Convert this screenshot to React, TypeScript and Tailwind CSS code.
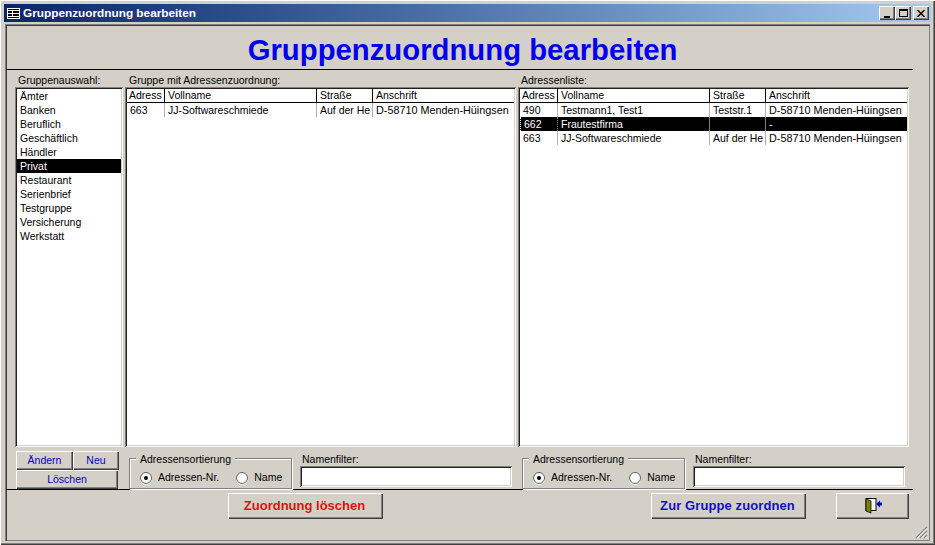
const raised = "bg-[#d4d0c8] shadow-[inset_1px_1px_0_#ffffff,inset_-1px_-1px_0_#404040,inset_-2px_-2px_0_#808080]";
const sunken = "bg-white shadow-[inset_1px_1px_0_#808080,inset_-1px_-1px_0_#ffffff,inset_2px_2px_0_#202020,inset_-2px_-2px_0_#d4d0c8]";

type Row = { nr: string; name: string; str: string; an: string; sel?: boolean };

const groups = ["Ämter", "Banken", "Beruflich", "Geschäftlich", "Händler", "Privat", "Restaurant", "Serienbrief", "Testgruppe", "Versicherung", "Werkstatt"];

function Cell({ children, sel, last, focus }: { children?: React.ReactNode; sel?: boolean; last?: boolean; focus?: boolean }) {
  return (
    <div className={`h-[14px] leading-[14px] pl-[3px] overflow-hidden whitespace-nowrap ${last ? "text-[10.8px]" : sel ? "border-r border-[#808080]" : "border-r border-[#b0b0b0]"} ${focus ? "border-l border-dotted border-l-white pl-[2px]" : ""}`}>
      {children}
    </div>
  );
}

function AddressList({ width, rows }: { width: string; rows: Row[] }) {
  return (
    <div className={`${sunken} ${width} h-[360px] pt-[2px] pl-[2px] pr-[2px]`}>
      <div className="grid grid-cols-[38px_152px_56px_1fr] h-[13px] border-b border-black box-content">
        <div className="h-[13px] leading-[13px] pl-[2px] border-r border-black overflow-hidden">Adress</div>
        <div className="h-[13px] leading-[13px] pl-[3px] border-r border-black">Vollname</div>
        <div className="h-[13px] leading-[13px] pl-[3px] border-r border-black">Straße</div>
        <div className="h-[13px] leading-[13px] pl-[3px]">Anschrift</div>
      </div>
      {rows.map((r) => (
        <div key={r.nr} className={`grid grid-cols-[38px_152px_56px_1fr] ${r.sel ? "bg-black text-white" : ""}`}>
          <Cell sel={r.sel} focus={r.sel}>{r.nr}</Cell>
          <Cell sel={r.sel}>{r.name}</Cell>
          <Cell sel={r.sel}>{r.str}</Cell>
          <Cell sel={r.sel} last>{r.an}</Cell>
        </div>
      ))}
    </div>
  );
}

function Radio({ on, label }: { on?: boolean; label: string }) {
  return (
    <div className="flex items-center gap-[6px]">
      <span className="w-[12px] h-[12px] rounded-full bg-white border border-[#606060] shadow-[0_1px_0_#ffffff] flex items-center justify-center">
        {on && <span className="w-[4px] h-[4px] rounded-full bg-black" />}
      </span>
      <span>{label}</span>
    </div>
  );
}

function SortFilter({ inputW }: { inputW: string }) {
  return (
    <div className="flex gap-[8px]">
      <div className="relative w-[163px] h-[31px] mt-[10px] border border-[#808080] shadow-[inset_1px_1px_0_#ffffff,1px_1px_0_#ffffff]">
        <span className="absolute left-[6px] -top-[6px] bg-[#d4d0c8] px-[4px] leading-[13px]">Adressensortierung</span>
        <div className="flex gap-[17px] pl-[10px] pt-[12px] leading-[13px]">
          <Radio on label="Adressen-Nr." />
          <Radio label="Name" />
        </div>
      </div>
      <div className="flex flex-col pt-[5px]">
        <span className="leading-[13px] pl-[2px]">Namenfilter:</span>
        <div className={`${sunken} ${inputW} h-[21px]`} />
      </div>
    </div>
  );
}

function Btn({ className, children }: { className: string; children: React.ReactNode }) {
  return <div className={`${raised} flex items-center justify-center ${className}`}>{children}</div>;
}

export default function App() {
  return (
    <div className="w-[935px] h-[545px] bg-[#d4d0c8] overflow-hidden text-[10.5px] text-black font-['Liberation_Sans',Arial,sans-serif] p-[4px] shadow-[inset_1px_1px_0_#ffffff,inset_-1px_-1px_0_#404040,inset_-2px_-2px_0_#808080]">
      <div className="h-[18px] bg-gradient-to-r from-[#0a246a] to-[#a6caf0] flex items-center pl-[3px] pr-[2px] text-white font-bold">
        <svg width="13" height="11" viewBox="0 0 13 11" className="shrink-0">
          <rect x="0" y="0" width="13" height="11" fill="#fff" />
          <rect x="1" y="1" width="11" height="1" fill="#000" />
          <rect x="1" y="3" width="4" height="2" fill="#000" />
          <rect x="6" y="3" width="6" height="2" fill="#000" />
          <rect x="1" y="6" width="4" height="2" fill="#000" />
          <rect x="6" y="6" width="6" height="2" fill="#000" />
          <rect x="1" y="9" width="11" height="1" fill="#000" />
        </svg>
        <span className="ml-[3px] text-[11.8px] leading-[14px]">Gruppenzuordnung bearbeiten</span>
        <div className="ml-auto flex">
          <Btn className="w-[16px] h-[14px] items-end pb-[2px]"><span className="block w-[6px] h-[2px] bg-black -ml-[1px]" /></Btn>
          <Btn className="w-[16px] h-[14px]"><span className="block w-[9px] h-[8px] border border-black border-t-2" /></Btn>
          <Btn className="w-[16px] h-[14px] ml-[2px]">
            <svg width="8" height="7" viewBox="0 0 8 7"><path d="M0.5 0 7.5 7M7.5 0 0.5 7" stroke="#000" strokeWidth="1.4" /></svg>
          </Btn>
        </div>
      </div>
      <div className="relative mt-[2px] ml-[1px] w-[925px] h-[517px] shadow-[inset_1px_1px_0_#808080,inset_2px_2px_0_#404040,inset_-1px_-1px_0_#808080]">
        <div className="h-[46px] ml-[1px] mr-[17px] border-b border-black flex items-center justify-center pt-[7px] pl-[6px] text-[#0000ee] font-bold text-[29.3px] leading-none">
          Gruppenzuordnung bearbeiten
        </div>
        <div className="flex pl-[10px] mt-[4px]">
          <div className="w-[110px]">
            <div className="h-[13px] leading-[13px] pl-[3px]">Gruppenauswahl:</div>
            <div className={`${sunken} h-[360px] w-[108px] pt-[2px] pl-[2px] pr-[2px]`}>
              {groups.map((g) => (
                <div key={g} className={`h-[14px] leading-[14px] pl-[3px] ${g === "Privat" ? "bg-black text-white" : ""}`}>{g}</div>
              ))}
            </div>
          </div>
          <div className="w-[393px]">
            <div className="h-[13px] leading-[13px] pl-[4px]">Gruppe mit Adressenzuordnung:</div>
            <AddressList width="w-[391px]" rows={[{ nr: "663", name: "JJ-Softwareschmiede", str: "Auf der He", an: "D-58710 Menden-Hüingsen" }]} />
          </div>
          <div className="w-[391px]">
            <div className="h-[13px] leading-[13px] pl-[3px]">Adressenliste:</div>
            <AddressList width="w-[391px]" rows={[
              { nr: "490", name: "Testmann1, Test1", str: "Teststr.1", an: "D-58710 Menden-Hüingsen" },
              { nr: "662", name: "Frautestfirma", str: "", an: "-", sel: true },
              { nr: "663", name: "JJ-Softwareschmiede", str: "Auf der He", an: "D-58710 Menden-Hüingsen" },
            ]} />
          </div>
        </div>
        <div className="flex ml-[1px] mr-[17px] h-[41px] border-b border-black pl-[10px] mt-[1px] box-content">
          <div className="w-[103px] mt-[3px] text-[#0000c0] mr-[10px]">
            <div className="flex">
              <Btn className="w-[57px] h-[19px]">Ändern</Btn>
              <Btn className="w-[46px] h-[19px]">Neu</Btn>
            </div>
            <Btn className="w-[102px] h-[19px]">Löschen</Btn>
          </div>
          <div className="w-[393px]"><SortFilter inputW="w-[212px]" /></div>
          <SortFilter inputW="w-[212px]" />
        </div>
        <div className="flex pt-[3px]">
          <div className="w-[223px]" />
          <Btn className="w-[155px] h-[26px] pr-[2px] text-[#e01010] font-bold text-[13px]">Zuordnung löschen</Btn>
          <div className="w-[268px]" />
          <Btn className="w-[155px] h-[26px] pr-[2px] text-[#1010c8] font-bold text-[13px] tracking-[0.1px]">Zur Gruppe zuordnen</Btn>
          <div className="w-[30px]" />
          <Btn className="w-[73px] h-[26px]">
            <svg width="18" height="16" viewBox="0 0 18 16">
              <rect x="2" y="0.5" width="10" height="12" fill="#fff" stroke="#000" />
              <path d="M2 1 7 3v12L2 13z" fill="#808000" stroke="#000" strokeWidth="0.8" />
              <path d="M12 6l4-3.5v2h2v3h-2v2z" fill="#0000c0" />
            </svg>
          </Btn>
        </div>
        <svg width="14" height="14" viewBox="0 0 14 14" className="absolute right-[2px] bottom-[2px]">
          <path d="M13 2 2 13M13 6 6 13M13 10 10 13" stroke="#808080" strokeWidth="1.2" />
          <path d="M13 3.5 3.5 13M13 7.5 7.5 13M13 11.5 11.5 13" stroke="#fff" strokeWidth="1" />
        </svg>
      </div>
    </div>
  );
}
